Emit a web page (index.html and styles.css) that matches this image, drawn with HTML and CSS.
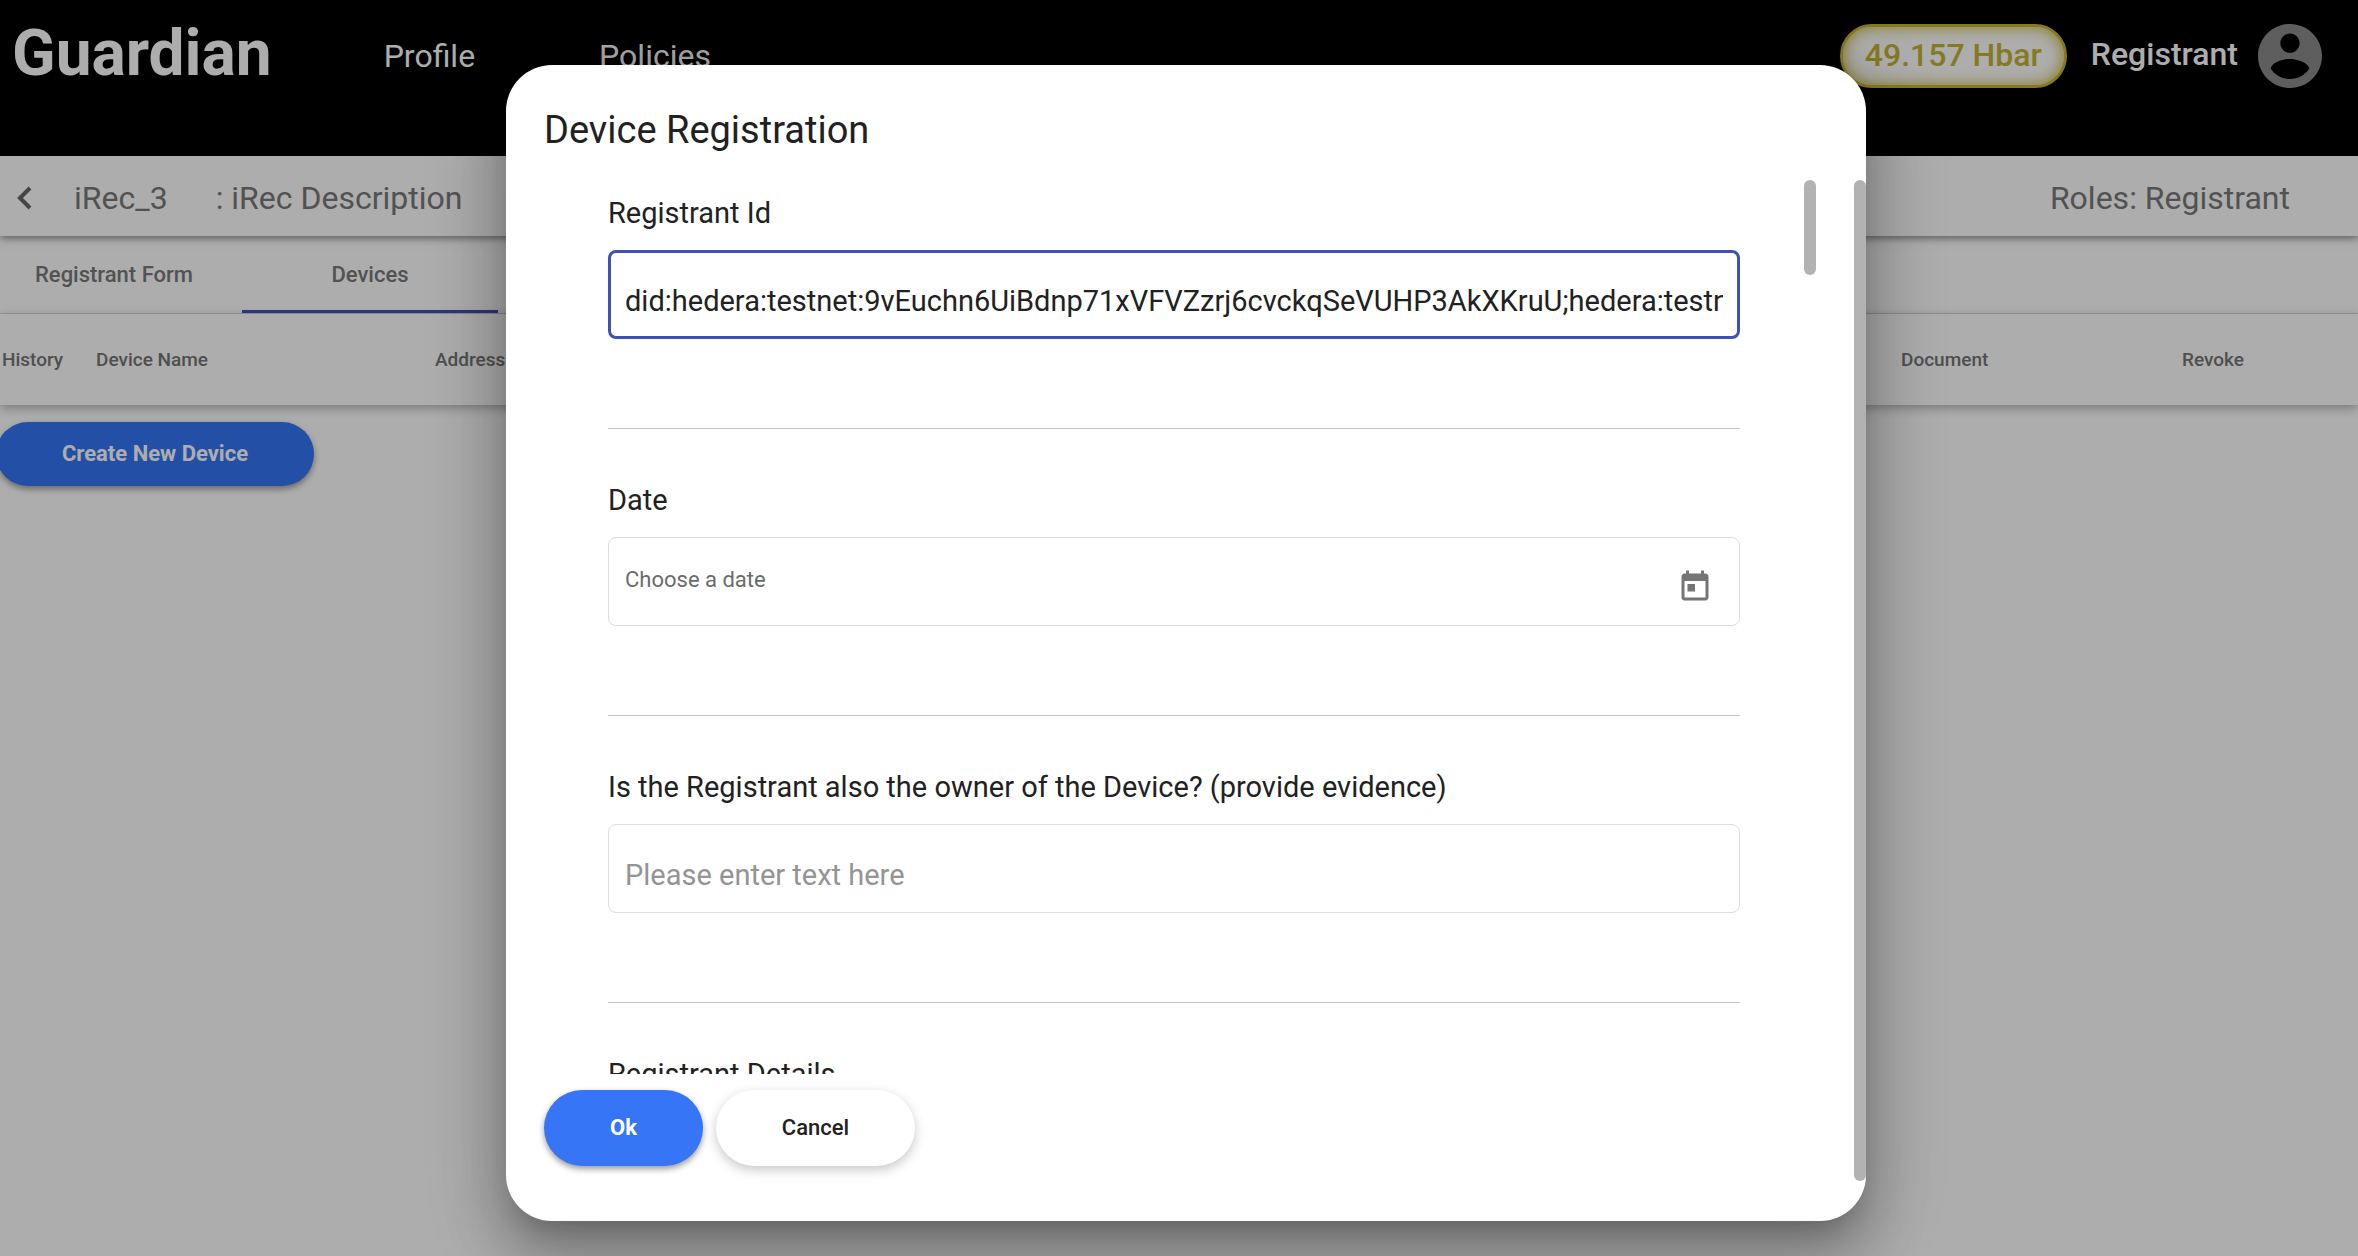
FILE: index.html
```html
<!DOCTYPE html>
<html lang="en">
<head>
<meta charset="utf-8">
<title>Guardian</title>
<link rel="stylesheet" href="styles.css">
</head>
<body>
<div class="app">
  <header class="topbar">
    <span class="brand">Guardian</span>
    <nav class="nav">
      <a href="#profile">Profile</a>
      <a href="#policies">Policies</a>
    </nav>
    <div class="account">
      <span class="balance">49.157 Hbar</span>
      <span class="role">Registrant</span>
      <svg class="avatar" viewBox="2 2 20 20" aria-hidden="true"><path d="M12 2C6.480 2 2 6.480 2 12s4.480 10 10 10 10-4.480 10-10S17.520 2 12 2zm0 3c1.660 0 3 1.340 3 3s-1.340 3-3 3-3-1.340-3-3 1.340-3 3-3zm0 14.200c-2.500 0-4.710-1.280-6-3.220.030-1.990 4-3.080 6-3.080 1.990 0 5.970 1.090 6 3.080-1.290 1.940-3.500 3.220-6 3.220z"/></svg>
    </div>
  </header>
  <main>
    <div class="policybar">
      <a class="back" href="#back" aria-label="Back"><svg viewBox="0 0 16 24"><path d="M14 2 4 12l10 10"/></svg></a>
      <span class="policy-name">iRec_3</span>
      <span>: iRec Description</span>
      <span class="policy-roles">Roles: Registrant</span>
    </div>
    <nav class="tabs">
      <a class="tab" href="#form">Registrant Form</a>
      <a class="tab tab-active" href="#devices">Devices</a>
    </nav>
    <table class="devices">
      <colgroup><col class="col-history"><col class="col-name"><col><col class="col-document"><col class="col-revoke"></colgroup>
      <thead>
        <tr><th>History</th><th>Device Name</th><th>Address</th><th>Document</th><th>Revoke</th></tr>
      </thead>
    </table>
    <button class="btn btn-create" type="button">Create New Device</button>
  </main>
</div>

<div class="overlay">
  <form class="dialog" role="dialog" aria-labelledby="dialog-title">
    <h1 class="dialog-title" id="dialog-title">Device Registration</h1>
    <div class="dialog-body">
      <div class="field">
        <label for="registrant-id">Registrant Id</label>
        <div class="box box-focused"><input id="registrant-id" type="text" value="did:hedera:testnet:9vEuchn6UiBdnp71xVFVZzrj6cvckqSeVUHP3AkXKruU;hedera:testnet:fid=0.0.34227801"></div>
      </div>
      <div class="field">
        <label for="date">Date</label>
        <div class="box box-date">
          <input id="date" type="text" placeholder="Choose a date">
          <button class="picker" type="button" aria-label="Open calendar"><svg viewBox="0 0 24 24"><path d="M19 3h-1V1h-2v2H8V1H6v2H5c-1.110 0-1.990.900-1.990 2L3 19c0 1.100.890 2 2 2h14c1.100 0 2-.900 2-2V5c0-1.100-.900-2-2-2zm0 16H5V8h14v11zM7 10h5v5H7z"/></svg></button>
        </div>
      </div>
      <div class="field">
        <label for="owner">Is the Registrant also the owner of the Device? (provide evidence)</label>
        <div class="box"><input id="owner" type="text" placeholder="Please enter text here"></div>
      </div>
      <div class="field">
        <label for="details">Registrant Details</label>
        <div class="box"><input id="details" type="text"></div>
      </div>
    </div>
    <div class="actions">
      <button class="btn btn-ok" type="submit">Ok</button>
      <button class="btn btn-cancel" type="button">Cancel</button>
    </div>
    <span class="scrollbar scrollbar-fields"></span>
    <span class="scrollbar scrollbar-dialog"></span>
  </form>
</div>
</body>
</html>
```
FILE: styles.css
```css
* { box-sizing: border-box; }

html, body { height: 100%; }

body {
  margin: 0;
  overflow: hidden;
  font-family: Roboto, sans-serif;
  color: #212121;
  background: #fff;
}

a { color: inherit; text-decoration: none; }

/* Top bar */
.topbar {
  display: flex;
  align-items: flex-start;
  height: 156px;
  padding: 0 36px 0 12px;
  background: #000;
  color: #fff;
}

.brand {
  margin-top: 16px;
  font-size: 64px;
  line-height: 76px;
  font-weight: 700;
}

.nav {
  display: flex;
  gap: 124px;
  margin: 36px 0 0 112px;
  font-size: 32px;
  line-height: 40px;
}

.account {
  display: flex;
  align-items: center;
  height: 64px;
  margin: 24px 0 0 auto;
  font-size: 32px;
  line-height: 36px;
  font-weight: 500;
}

.balance {
  height: 64px;
  padding: 0 22px;
  border: 3px solid #c5b42f;
  border-radius: 32px;
  line-height: 56px;
  color: #c5b42f;
  background: #fff;
  box-shadow: inset 0 0 16px #c5b42f;
}

.role { margin: 0 20px 0 24px; padding-bottom: 4px; }

.avatar { width: 64px; height: 64px; fill: #8b8b8b; }

/* Policy bar */
.policybar {
  position: relative;
  display: flex;
  align-items: center;
  height: 80px;
  padding: 4px 68px 0 16px;
  font-size: 32px;
  color: #797979;
  box-shadow: 0 2px 8px rgba(0, 0, 0, .5);
}

.back { display: flex; margin-right: 42px; }

.back svg {
  width: 16px;
  height: 24px;
  fill: none;
  stroke: #666;
  stroke-width: 4;
}

.policy-name { margin-right: 48px; }

.policy-roles { margin-left: auto; }

/* Tabs */
.tabs {
  display: flex;
  height: 78px;
  border-bottom: 1px solid #dcdcdc;
}

.tab {
  width: 256px;
  font-size: 22px;
  line-height: 78px;
  font-weight: 500;
  text-align: center;
  color: #7a7a7a;
}

.tab:first-child { width: 242px; padding-right: 14px; }

.tab-active { height: 77px; border-bottom: 3px solid #3f51b5; }

/* Device table */
.devices {
  width: 100%;
  height: 91px;
  table-layout: fixed;
  border-collapse: collapse;
  box-shadow: 0 3px 10px rgba(0, 0, 0, .3);
}

.devices th {
  padding: 0;
  font-size: 19px;
  font-weight: 500;
  text-align: left;
  color: #757575;
}

.devices th:first-child { padding-left: 2px; }

.col-history { width: 96px; }
.col-name { width: 339px; }
.col-document { width: 281px; }
.col-revoke { width: 176px; }

/* Buttons */
.btn {
  border: 0;
  font: 500 22px/32px Roboto, sans-serif;
}

.btn-create {
  width: 318px;
  height: 64px;
  margin: 17px 0 0 -4px;
  border-radius: 32px;
  font-weight: 700;
  color: #fff;
  background: #3575f6;
  box-shadow: 0 3px 6px rgba(0, 0, 0, .4);
}

/* Dialog */
.overlay {
  position: absolute;
  inset: 0;
  padding: 65px 492px 35px 506px;
  background: rgba(0, 0, 0, .32);
}

.dialog {
  position: relative;
  display: flex;
  flex-direction: column;
  height: 100%;
  padding: 38px;
  border-radius: 46px;
  background: #fff;
  box-shadow: 0 17px 24px -11px rgba(0, 0, 0, .2), 0 38px 60px 5px rgba(0, 0, 0, .18), 0 14px 72px 12px rgba(0, 0, 0, .18);
}

.dialog-title {
  margin: 0 0 23px;
  font-size: 38px;
  line-height: 54px;
  font-weight: 400;
}

.dialog-body {
  flex: 1;
  min-height: 0;
  padding: 12px 88px 0 64px;
  overflow: hidden;
}

.field {
  height: 237px;
  margin-bottom: 50px;
  border-bottom: 1px solid #c4c4c4;
}

.field label {
  display: block;
  padding-top: 1px;
  margin-bottom: 17px;
  font-size: 29px;
  line-height: 40px;
}

.field:last-child { border: 0; }

.box {
  display: flex;
  align-items: center;
  height: 89px;
  padding: 12px 16px 0;
  border: 1px solid #dedede;
  border-radius: 8px;
}

.box-focused { padding: 12px 14px 0; border: 3px solid #3f51b5; }

.box input {
  flex: 1;
  min-width: 0;
  padding: 0;
  border: 0;
  outline: 0;
  font: 400 29px/40px Roboto, sans-serif;
  color: #212121;
  background: none;
}

.box input::placeholder { color: #949494; opacity: 1; }

.box-date { padding: 0 26px 4px 16px; }

.box-date input { font-size: 22px; }

.box-date input::placeholder { color: #6b6b6b; }

.picker {
  display: flex;
  margin-top: 14px;
  padding: 0;
  border: 0;
  background: none;
}

.picker svg { width: 36px; height: 36px; fill: #757575; }

.actions { display: flex; gap: 13px; margin: 16px 0 17px; }

.actions .btn { height: 76px; border-radius: 38px; }

.btn-ok {
  width: 159px;
  color: #fff;
  background: #3575f6;
  box-shadow: 0 3px 6px rgba(0, 0, 0, .4);
}

.actions .btn-ok { font-weight: 700; }

.btn-cancel {
  width: 199px;
  color: #212121;
  background: #fff;
  box-shadow: 0 4px 12px rgba(0, 0, 0, .22);
}

.scrollbar {
  position: absolute;
  top: 115px;
  width: 12px;
  border-radius: 6px;
  background: #b2b2b2;
}

.scrollbar-fields { right: 50px; height: 95px; }

.scrollbar-dialog { right: 0; bottom: 40px; }
```
